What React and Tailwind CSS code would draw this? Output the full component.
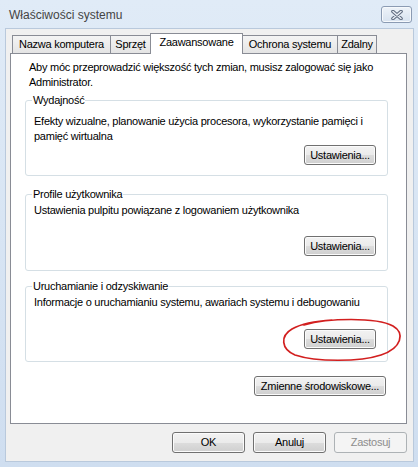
import React from 'react';

const Btn = ({ children, className = '', disabled = false }) => (
  <button
    className={
      'h-[20px] whitespace-nowrap rounded-[3px] border leading-[15px] ' +
      (disabled
        ? 'border-[#adb2b5] bg-[#f4f4f4] text-[#8d8d8d] '
        : 'border-[#707070] bg-[linear-gradient(#f2f2f2_0%,#ebebeb_50%,#dddddd_50%,#cfcfcf_100%)] text-black shadow-[inset_0_0_0_1px_#fbfbfb] ') +
      className
    }
  >
    {children}
  </button>
);

const Group = ({ title, className = '', children }) => (
  <div className={'relative w-[363px] rounded-[3px] border border-[#d5dfe5] pl-[8px] pr-[11px] ' + className}>
    <span className="absolute left-[6px] top-[-8px] bg-white px-[1px] leading-[15px] whitespace-nowrap">{title}</span>
    {children}
  </div>
);

const tabs = [
  { label: 'Nazwa komputera', w: 'w-[99px]' },
  { label: 'Sprzęt', w: 'w-[41px]' },
  { label: 'Zaawansowane', w: 'w-[93px]', active: true },
  { label: 'Ochrona systemu', w: 'w-[96px]' },
  { label: 'Zdalny', w: 'w-[40px]' },
];

export default function App() {
  return (
    <div className="relative flex h-[467px] w-[418px] flex-col overflow-hidden bg-[linear-gradient(#e0ebf7,#cfdef0)] font-['Liberation_Sans',Arial,sans-serif] text-[11px] tracking-[-0.25px] text-black">
      {/* title bar */}
      <div className="flex h-[28px] items-start justify-between pl-[9px] pr-[6px]">
        <span className="mt-[8px] text-[12px] leading-[15px] tracking-normal text-[#444]">Właściwości systemu</span>
        <div className="mt-[6px] flex h-[17px] w-[31px] items-center justify-center rounded-[3px] border border-[#8b9bb3] bg-[linear-gradient(#eef3f9,#d7e2ef)] shadow-[inset_0_0_0_1px_#f6f9fc]">
          <svg width="14" height="10" viewBox="0 0 14 10">
            <path d="M3 1.5 L11 8.5 M11 1.5 L3 8.5" stroke="#5d6a7e" strokeWidth="3.6" strokeLinecap="round" />
            <path d="M3 1.5 L11 8.5 M11 1.5 L3 8.5" stroke="#e9eef5" strokeWidth="1.6" strokeLinecap="round" />
          </svg>
        </div>
      </div>

      {/* client area */}
      <div className="ml-[5px] mr-[4px] flex h-[434px] flex-col border border-[#b9c9dc] bg-[#f0f0f0]">
        <div className="flex h-[24px] items-end pl-[6px] pt-[4px]">
          {tabs.map((t, i) =>
            t.active ? (
              <div
                key={t.label}
                className={t.w + ' relative z-10 -mb-px -ml-px flex h-[21px] justify-center whitespace-nowrap border border-b-0 border-[#898c95] bg-white pt-[1px] leading-[15px]'}
              >
                {t.label}
              </div>
            ) : (
              <div
                key={t.label}
                className={
                  t.w +
                  (i > 0 ? ' -ml-px' : '') +
                  ' flex h-[18px] items-center justify-center whitespace-nowrap border border-b-0 border-[#898c95] bg-[linear-gradient(#f4f4f4,#e4e4e4)] leading-[15px]'
                }
              >
                {t.label}
              </div>
            )
          )}
        </div>

        <div className="ml-[4px] h-[371px] w-[397px] border border-[#898c95] bg-white pl-[14px] pt-[6px]">
          <p className="whitespace-nowrap pl-[4px] leading-[15px]">
            Aby móc przeprowadzić większość tych zmian, musisz zalogować się jako
            <br />
            Administrator.
          </p>

          <Group title="Wydajność" className="mt-[10px] h-[76px] pt-[13px]">
            <p className="whitespace-nowrap leading-[15px]">
              Efekty wizualne, planowanie użycia procesora, wykorzystanie pamięci i
              <br />
              pamięć wirtualna
            </p>
            <div className="mt-[1px] flex justify-end">
              <Btn className="w-[72px]">Ustawienia...</Btn>
            </div>
          </Group>

          <Group title="Profile użytkownika" className="mt-[18px] h-[77px] pt-[8px]">
            <p className="whitespace-nowrap leading-[15px]">Ustawienia pulpitu powiązane z logowaniem użytkownika</p>
            <div className="mt-[18px] flex justify-end">
              <Btn className="w-[72px]">Ustawienia...</Btn>
            </div>
          </Group>

          <Group title="Uruchamianie i odzyskiwanie" className="mt-[15px] h-[76px] pt-[8px]">
            <p className="whitespace-nowrap leading-[15px]">
              Informacje o uruchamianiu systemu, awariach systemu i debugowaniu
            </p>
            <div className="mt-[19px] flex justify-end">
              <Btn className="w-[72px]">Ustawienia...</Btn>
            </div>
          </Group>

          <div className="mt-[14px] flex w-[363px] justify-end pr-[2px]">
            <Btn className="w-[132px]">Zmienne środowiskowe...</Btn>
          </div>
        </div>

        <div className="mt-[8px] flex justify-end gap-[8px] pr-[6px]">
          <Btn className="h-[21px] w-[73px]">OK</Btn>
          <Btn className="h-[21px] w-[73px]">Anuluj</Btn>
          <Btn className="h-[21px] w-[73px]" disabled>
            Zastosuj
          </Btn>
        </div>
      </div>

      {/* red annotation ellipse */}
      <svg className="absolute left-[280px] top-[316px]" width="124" height="48" viewBox="0 0 124 48">
        <path
          d="M24 9 C48 2 96 1 113 10 C125 17 122 32 101 39 C80 46 36 46 15 39 C1 33 0 20 12 13 C21 8 36 5 52 4"
          fill="none"
          stroke="#d21f1f"
          strokeWidth="1.7"
          strokeLinecap="round"
        />
      </svg>
    </div>
  );
}
